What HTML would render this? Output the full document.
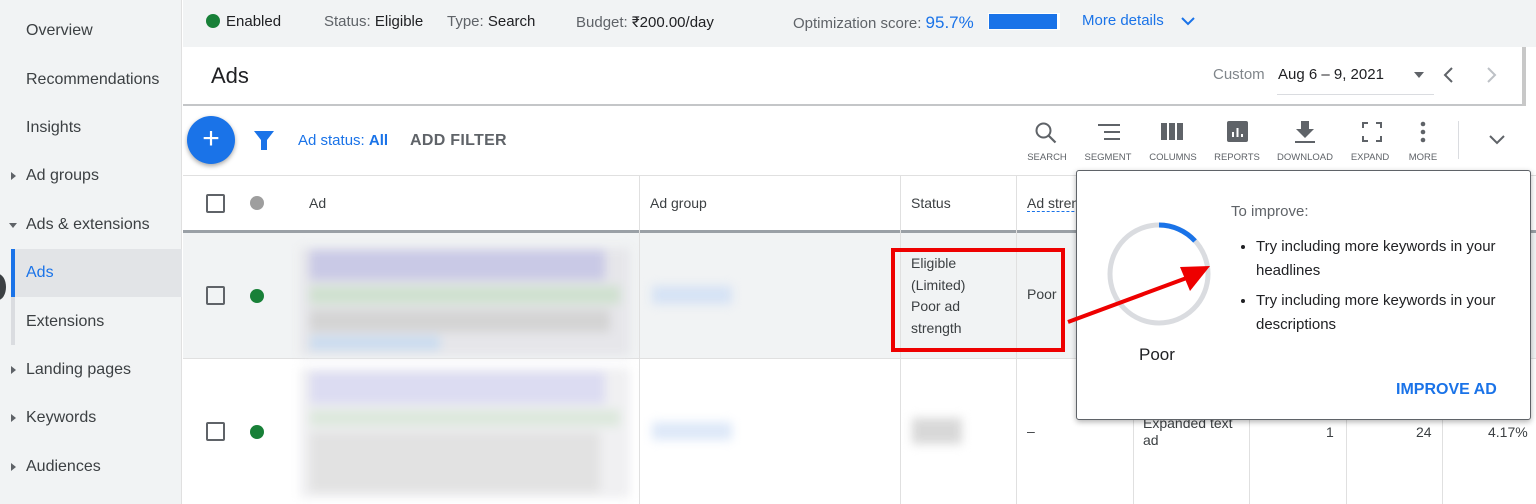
<!DOCTYPE html>
<html><head><meta charset="utf-8"><style>
*{box-sizing:border-box;margin:0;padding:0}
body{width:1536px;height:504px;overflow:hidden;position:relative;font-family:"Liberation Sans",Roboto,sans-serif;background:#fff;color:#3c4043}
.a{position:absolute}
.side{left:0;top:0;width:182px;height:504px;background:#f1f3f4;border-right:1px solid #e0e0e0}
.side div{position:absolute;left:26px;font-size:16px;color:#3c4043}
.tri{position:absolute;left:11px;width:0;height:0}
.blur{filter:blur(5px)}
.hd{font-size:14px;color:#3c4043}
.tl{font-size:9.5px;color:#5f6368;text-align:center;width:70px}
.vl{width:1px;background:#e0e0e0}
</style></head><body>
<!-- sidebar -->
<div class="a side">
 <div style="top:22px">Overview</div>
 <div style="top:71px">Recommendations</div>
 <div style="top:119px">Insights</div>
 <span class="tri" style="top:172px;border-left:5px solid #5f6368;border-top:4px solid transparent;border-bottom:4px solid transparent"></span>
 <div style="top:167px">Ad groups</div>
 <span class="tri" style="left:9px;top:223px;border-top:5px solid #5f6368;border-left:4px solid transparent;border-right:4px solid transparent"></span>
 <div style="top:216px">Ads &amp; extensions</div>
 <span style="position:absolute;left:11px;top:249px;width:171px;height:48px;background:#e2e4e7"></span>
 <span style="position:absolute;left:11px;top:249px;width:4px;height:48px;background:#1a73e8"></span>
 <div style="top:264px;color:#1a73e8">Ads</div>
 <span style="position:absolute;left:11px;top:297px;width:4px;height:48px;background:#dadce0"></span>
 <div style="top:313px">Extensions</div>
 <span class="tri" style="top:366px;border-left:5px solid #5f6368;border-top:4px solid transparent;border-bottom:4px solid transparent"></span>
 <div style="top:361px">Landing pages</div>
 <span class="tri" style="top:414px;border-left:5px solid #5f6368;border-top:4px solid transparent;border-bottom:4px solid transparent"></span>
 <div style="top:409px">Keywords</div>
 <span class="tri" style="top:463px;border-left:5px solid #5f6368;border-top:4px solid transparent;border-bottom:4px solid transparent"></span>
 <div style="top:458px">Audiences</div>
</div>
<div class="a" style="left:-10px;top:274px;width:16px;height:26px;border-radius:50%;background:#3c4043"></div>
<!-- top bar -->
<div class="a" style="left:183px;top:0;width:1353px;height:47px;background:#f1f3f4"></div>
<div class="a" style="left:206px;top:14px;width:14px;height:14px;border-radius:50%;background:#188038"></div>
<div class="a" style="left:226px;top:13px;font-size:15px;color:#202124">Enabled</div>
<div class="a" style="left:324px;top:13px;font-size:15px;color:#5f6368">Status: <span style="color:#202124">Eligible</span></div>
<div class="a" style="left:447px;top:13px;font-size:15px;color:#5f6368">Type: <span style="color:#202124">Search</span></div>
<div class="a" style="left:576px;top:13px;font-size:15px;color:#5f6368">Budget: <span style="color:#202124">₹200.00/day</span></div>
<div class="a" style="left:793px;top:13px;font-size:15px;color:#5f6368">Optimization score: <span style="color:#1a73e8;font-size:17px">95.7%</span></div>
<div class="a" style="left:988px;top:13px;width:72px;height:17px;background:#1a73e8;border:1px solid #fff;border-right:3px solid #fff"></div>
<div class="a" style="left:1082px;top:12px;font-size:15px;color:#1a73e8">More details</div>
<svg class="a" style="left:1180px;top:15px" width="16" height="12"><path d="M2 3l6 6 6-6" stroke="#1a73e8" stroke-width="2" fill="none"/></svg>
<!-- Ads header -->
<div class="a" style="left:183px;top:47px;width:1341px;height:59px;background:#fff;border-bottom:2px solid #c4c6c8"></div>
<div class="a" style="left:1522px;top:47px;width:4px;height:59px;background:#c8c8c8"></div>
<div class="a" style="left:211px;top:63px;font-size:22px;color:#202124">Ads</div>
<div class="a" style="left:1213px;top:66px;font-size:15px;color:#80868b">Custom</div>
<div class="a" style="left:1278px;top:66px;font-size:15px;color:#202124">Aug 6 – 9, 2021</div>
<div class="a" style="left:1277px;top:94px;width:157px;height:1px;background:#dadce0"></div>
<div class="a" style="left:1414px;top:72px;border-top:6px solid #5f6368;border-left:5px solid transparent;border-right:5px solid transparent"></div>
<svg class="a" style="left:1440px;top:66px" width="60" height="18"><path d="M12 2l-7 7 7 7" stroke="#5f6368" stroke-width="2" fill="none"/><path d="M48 2l7 7-7 7" stroke="#bdc1c6" stroke-width="2" fill="none"/></svg>
<!-- toolbar -->
<div class="a" style="left:187px;top:116px;width:48px;height:48px;border-radius:50%;background:#1a73e8;box-shadow:0 2px 5px rgba(0,0,0,.35);color:#fff;font-size:30px;text-align:center;line-height:46px">+</div>
<svg class="a" style="left:253px;top:130px" width="22" height="22"><path d="M1 1h20l-7 9v10h-6v-10z" fill="#1a73e8"/></svg>
<div class="a" style="left:298px;top:132px;font-size:15px;color:#1a73e8">Ad status: <b>All</b></div>
<div class="a" style="left:410px;top:132px;font-size:16px;color:#5f6368;font-weight:bold;letter-spacing:.3px">ADD FILTER</div>
<svg class="a" style="left:1034px;top:121px" width="24" height="24"><circle cx="9.5" cy="9.5" r="7" stroke="#5f6368" stroke-width="2" fill="none"/><path d="M14.5 14.5l7 7" stroke="#5f6368" stroke-width="2.2"/></svg>
<svg class="a" style="left:1096px;top:122px" width="26" height="22"><path d="M2 3h22M8 10h16M8 17h16" stroke="#5f6368" stroke-width="2"/></svg>
<svg class="a" style="left:1160px;top:121px" width="26" height="22"><rect x="1" y="2" width="6" height="17" fill="#5f6368"/><rect x="9" y="2" width="6" height="17" fill="#5f6368"/><rect x="17" y="2" width="6" height="17" fill="#5f6368"/></svg>
<svg class="a" style="left:1226px;top:120px" width="24" height="24"><rect x="1" y="1" width="21" height="21" rx="2" fill="#5f6368"/><path d="M7 17v-5M11.5 17v-9M16 17v-3" stroke="#fff" stroke-width="2"/></svg>
<svg class="a" style="left:1294px;top:120px" width="22" height="24"><path d="M7 1h8v8h5l-9 9-9-9h5z" fill="#5f6368"/><rect x="1" y="21" width="20" height="2" fill="#5f6368"/></svg>
<svg class="a" style="left:1361px;top:121px" width="22" height="22"><path d="M2 7V2h5M15 2h5v5M20 15v5h-5M7 20H2v-5" stroke="#5f6368" stroke-width="2" fill="none"/></svg>
<svg class="a" style="left:1417px;top:121px" width="12" height="24"><circle cx="6" cy="3" r="2.3" fill="#5f6368"/><circle cx="6" cy="11" r="2.3" fill="#5f6368"/><circle cx="6" cy="19" r="2.3" fill="#5f6368"/></svg>
<div class="a tl" style="left:1012px;top:152px">SEARCH</div>
<div class="a tl" style="left:1073px;top:152px">SEGMENT</div>
<div class="a tl" style="left:1138px;top:152px">COLUMNS</div>
<div class="a tl" style="left:1202px;top:152px">REPORTS</div>
<div class="a tl" style="left:1270px;top:152px">DOWNLOAD</div>
<div class="a tl" style="left:1335px;top:152px">EXPAND</div>
<div class="a tl" style="left:1388px;top:152px">MORE</div>
<div class="a" style="left:1458px;top:121px;width:1px;height:38px;background:#dadce0"></div>
<svg class="a" style="left:1488px;top:134px" width="18" height="12"><path d="M2 2l7 7 7-7" stroke="#5f6368" stroke-width="2" fill="none"/></svg>
<!-- table header -->
<div class="a" style="left:183px;top:175px;width:1353px;height:1px;background:#e0e0e0"></div>
<div class="a" style="left:183px;top:230px;width:1353px;height:3px;background:#9aa0a6"></div>
<div class="a" style="left:206px;top:194px;width:19px;height:19px;border:2px solid #5f6368;border-radius:2px"></div>
<div class="a" style="left:250px;top:196px;width:14px;height:14px;border-radius:50%;background:#9e9e9e"></div>
<div class="a hd" style="left:309px;top:195px">Ad</div>
<div class="a hd" style="left:650px;top:195px">Ad group</div>
<div class="a hd" style="left:911px;top:195px">Status</div>
<div class="a hd" style="left:1027px;top:195px;border-bottom:1px dashed #1a73e8">Ad strength</div>
<div class="a vl" style="left:639px;top:176px;height:328px"></div>
<div class="a vl" style="left:900px;top:176px;height:328px"></div>
<div class="a vl" style="left:1016px;top:176px;height:328px"></div>
<!-- row 1 -->
<div class="a" style="left:183px;top:233px;width:1353px;height:126px;background:#f1f3f4;border-bottom:1px solid #e0e0e0"></div>
<div class="a vl" style="left:639px;top:233px;height:271px"></div>
<div class="a vl" style="left:900px;top:233px;height:271px"></div>
<div class="a vl" style="left:1016px;top:233px;height:271px"></div>
<div class="a" style="left:206px;top:286px;width:19px;height:19px;border:2px solid #5f6368;border-radius:2px"></div>
<div class="a" style="left:250px;top:289px;width:14px;height:14px;border-radius:50%;background:#188038"></div>
<div class="a blur" style="left:300px;top:248px;width:330px;height:108px;background:#e6e6ea">
 <div style="position:absolute;left:10px;top:2px;width:295px;height:30px;background:#c9c9e6"></div>
 <div style="position:absolute;left:10px;top:38px;width:310px;height:18px;background:#cfe1cf"></div>
 <div style="position:absolute;left:10px;top:62px;width:300px;height:22px;background:#d4d4d4"></div>
 <div style="position:absolute;left:10px;top:88px;width:130px;height:14px;background:#cadcf0"></div>
</div>
<div class="a blur" style="left:652px;top:286px;width:80px;height:18px;background:#d5e2f5"></div>
<div class="a" style="left:911px;top:253px;font-size:14px;line-height:21.5px;color:#3c4043">Eligible<br>(Limited)<br>Poor ad<br>strength</div>
<div class="a" style="left:1027px;top:286px;font-size:14px">Poor</div>
<div class="a" style="left:891px;top:248px;width:174px;height:104px;border:4px solid #ee0000"></div>
<!-- row 2 -->
<div class="a" style="left:206px;top:422px;width:19px;height:19px;border:2px solid #5f6368;border-radius:2px"></div>
<div class="a" style="left:250px;top:425px;width:14px;height:14px;border-radius:50%;background:#188038"></div>
<div class="a blur" style="left:300px;top:368px;width:330px;height:130px;background:#f0f0f2">
 <div style="position:absolute;left:10px;top:4px;width:295px;height:32px;background:#dcdcf2"></div>
 <div style="position:absolute;left:10px;top:42px;width:310px;height:16px;background:#dce8dc"></div>
 <div style="position:absolute;left:10px;top:64px;width:290px;height:60px;background:#e2e2e2"></div>
</div>
<div class="a blur" style="left:652px;top:422px;width:80px;height:18px;background:#dde8f8"></div>
<div class="a blur" style="left:912px;top:418px;width:50px;height:26px;background:#d8d8d8"></div>
<div class="a" style="left:1027px;top:423px;font-size:14px">–</div>
<div class="a vl" style="left:1133px;top:420px;height:84px"></div>
<div class="a vl" style="left:1249px;top:420px;height:84px"></div>
<div class="a vl" style="left:1346px;top:420px;height:84px"></div>
<div class="a vl" style="left:1442px;top:420px;height:84px"></div>
<div class="a" style="left:1143px;top:415px;font-size:14px;line-height:17px">Expanded text<br>ad</div>
<div class="a" style="left:1326px;top:424px;font-size:14px">1</div>
<div class="a" style="left:1416px;top:424px;font-size:14px">24</div>
<div class="a" style="left:1488px;top:424px;font-size:14px">4.17%</div>
<!-- popup -->
<div class="a" style="left:1076px;top:170px;width:455px;height:250px;background:#fff;border:1px solid #5f6368;border-radius:3px;box-shadow:0 2px 6px rgba(0,0,0,.3)"></div>
<svg class="a" style="left:1104px;top:219px" width="110" height="110"><circle cx="55" cy="55" r="49" stroke="#dadce0" stroke-width="5" fill="none"/><path d="M55 6A49 49 0 0 1 91 22" stroke="#1a73e8" stroke-width="5" fill="none"/></svg>
<div class="a" style="left:1139px;top:345px;font-size:17px;color:#202124">Poor</div>
<div class="a" style="left:1231px;top:203px;font-size:15px;color:#5f6368">To improve:</div>
<ul class="a" style="left:1256px;top:235px;width:262px;font-size:15px;line-height:24px;color:#202124;list-style:disc">
<li style="margin-bottom:6px">Try including more keywords in your headlines</li>
<li>Try including more keywords in your descriptions</li></ul>
<div class="a" style="left:1396px;top:381px;font-size:16px;font-weight:bold;color:#1a73e8">IMPROVE AD</div>
<!-- arrow -->
<svg class="a" style="left:1060px;top:250px" width="160" height="80"><path d="M8 72L132 26" stroke="#ee0000" stroke-width="4"/><path d="M150 16l-30 1 10 24z" fill="#ee0000"/></svg>
</body></html>
